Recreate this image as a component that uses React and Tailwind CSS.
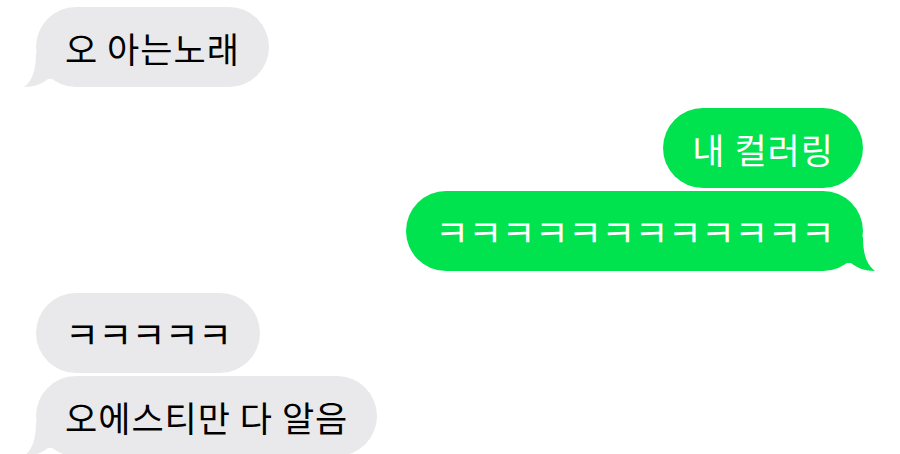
const font = { fontFamily: '"Noto Sans CJK KR", "Noto Sans", sans-serif' };

const LeftTail = () => (
  <svg className="absolute left-[-12px] bottom-0" width="34" height="34" viewBox="0 0 34 34">
    <path d="M12 0 C12 18 8 28 0 34 C10 34 18 31 24 26 L34 26 L34 0 Z" fill="#e9e9eb" />
  </svg>
);

const RightTail = () => (
  <svg className="absolute right-[-12px] bottom-0" width="34" height="34" viewBox="0 0 34 34">
    <path d="M22 0 C22 18 26 28 34 34 C24 34 16 31 10 26 L0 26 L0 0 Z" fill="#00e34f" />
  </svg>
);

// ㅋ jamo render small in Noto, so they get a slightly bigger size with tighter tracking
const Bubble = ({ text, side, tail, jamo, className = '' }) => {
  const isMe = side === 'right';
  return (
    <div className={`flex ${isMe ? 'justify-end pr-[37px]' : 'justify-start pl-[36px]'} ${className}`}>
      <div
        className={`relative h-[80px] rounded-[40px] px-[29px] flex items-center leading-none whitespace-nowrap ${
          jamo ? 'text-[37px] tracking-[-0.8px]' : 'text-[35px] tracking-[1px]'
        } ${isMe ? 'bg-[#00e34f] text-white' : 'bg-[#e9e9eb] text-black'}`}
        style={font}
      >
        {tail && (isMe ? <RightTail /> : <LeftTail />)}
        <span className="relative">{text}</span>
      </div>
    </div>
  );
};

export default function App() {
  return (
    <div className="w-[900px] h-[454px] bg-white overflow-hidden pt-[7px] flex flex-col">
      <Bubble text="오 아는노래" side="left" tail />
      <Bubble text="내 컬러링" side="right" className="mt-[21px]" />
      <Bubble text="ㅋㅋㅋㅋㅋㅋㅋㅋㅋㅋㅋㅋ" side="right" tail jamo className="mt-[3px]" />
      <Bubble text="ㅋㅋㅋㅋㅋ" side="left" jamo className="mt-[22px]" />
      <Bubble text="오에스티만 다 알음" side="left" tail className="mt-[3px]" />
    </div>
  );
}
